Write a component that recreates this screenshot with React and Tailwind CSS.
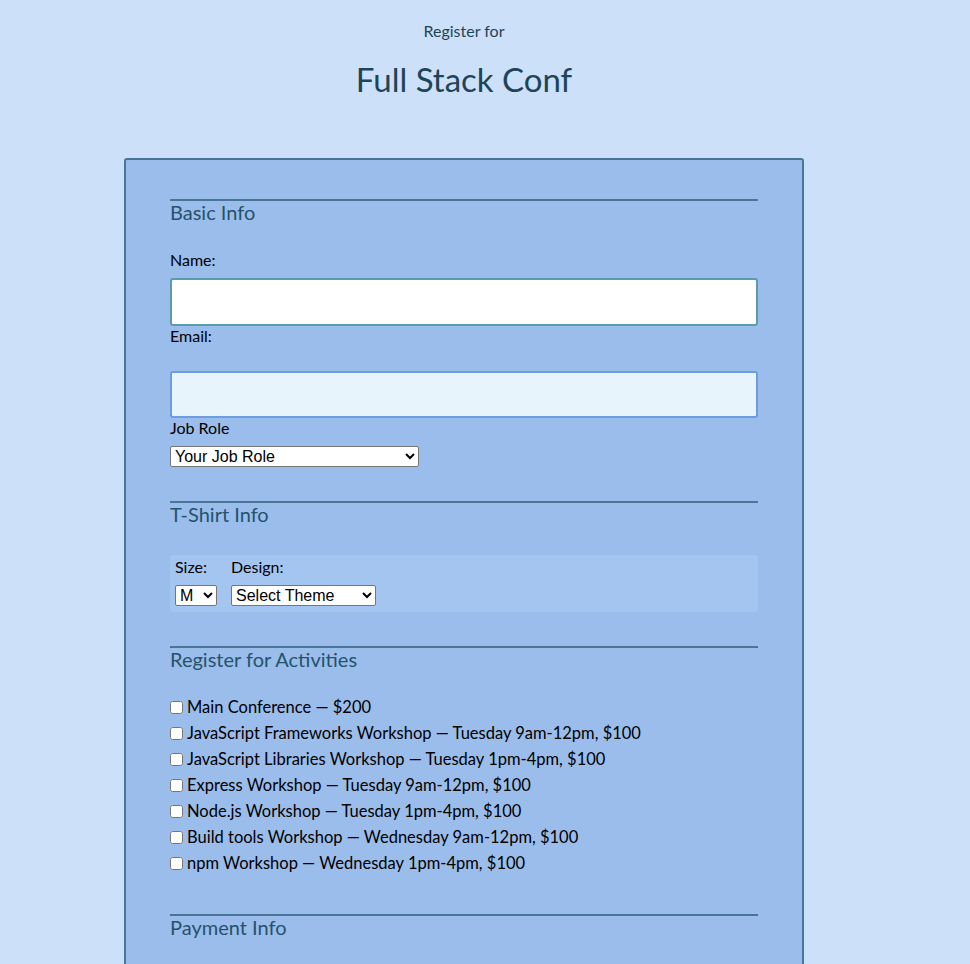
import React from 'react';

const activities = [
  'Main Conference — $200',
  'JavaScript Frameworks Workshop — Tuesday 9am-12pm, $100',
  'JavaScript Libraries Workshop — Tuesday 1pm-4pm, $100',
  'Express Workshop — Tuesday 9am-12pm, $100',
  'Node.js Workshop — Tuesday 1pm-4pm, $100',
  'Build tools Workshop — Wednesday 9am-12pm, $100',
  'npm Workshop — Wednesday 1pm-4pm, $100',
];

function Legend({ children, className = '' }) {
  return (
    <div className={`h-[26px] border-t-2 border-[#4a7596] pt-px text-[20px] leading-5 text-[#24536a] ${className}`}>
      {children}
    </div>
  );
}

export default function App() {
  return (
    <div className="min-h-screen bg-[#cce0fa] font-['Lato','Open_Sans',sans-serif] text-black">
      <div className="w-[928px]">
        {/* Header */}
        <header className="flex flex-col items-center text-[#1d4556]">
          <p className="mt-[21px] text-[16px] leading-5">Register for</p>
          <h1 className="mt-[17px] text-[33px] leading-[42px]">Full Stack Conf</h1>
        </header>

        <form className="mx-auto mt-[58px] w-[680px] rounded-[3px] border-2 border-[#4a7596] bg-[#9bbdec] px-[44px] pt-[39px] pb-10">
          {/* Basic Info */}
          <Legend>Basic Info</Legend>
          <label className="mt-[25px] block text-[16px] leading-5">Name:</label>
          <input type="text" className="mt-2 block h-[48px] w-full rounded-[3px] border-2 border-[#5c9bac] bg-white" />
          <label className="block h-[19px] text-[16px] leading-[19px]">Email:</label>
          <input type="email" className="mt-[26px] block h-[47px] w-full rounded-[3px] border-2 border-[#6d9ddf] bg-[#e8f4fc]" />
          <label className="block h-5 text-[16px] leading-5">Job Role</label>
          <select className="mt-2 block h-[21px] w-[249px] rounded-[2px] border border-[#767676] bg-white font-['Liberation_Sans',Arial,sans-serif] text-[16px] leading-[19px]">
            <option>Your Job Role</option>
          </select>

          {/* T-Shirt Info */}
          <Legend className="mt-[34px]">T-Shirt Info</Legend>
          <div className="mt-[28px] flex gap-[14px] rounded-[4px] bg-[#a5c5f1] px-[5px] pt-[2px] pb-[6px]">
            <div className="flex flex-col">
              <label className="text-[16px] leading-5">Size:</label>
              <select className="mt-2 h-[21px] w-[42px] rounded-[2px] border border-[#767676] bg-white font-['Liberation_Sans',Arial,sans-serif] text-[16px] leading-[19px]">
                <option>M</option>
              </select>
            </div>
            <div className="flex flex-col">
              <label className="text-[16px] leading-5">Design:</label>
              <select className="mt-2 h-[21px] w-[145px] rounded-[2px] border border-[#767676] bg-white font-['Liberation_Sans',Arial,sans-serif] text-[16px] leading-[19px]">
                <option>Select Theme</option>
              </select>
            </div>
          </div>

          {/* Activities */}
          <Legend className="mt-[34px]">Register for Activities</Legend>
          <div className="mt-[22px] flex flex-col">
            {activities.map((a) => (
              <label key={a} className="flex h-[26px] items-center text-[16.5px]">
                <input type="checkbox" className="mr-1 h-[13px] w-[13px]" />
                <span>{a}</span>
              </label>
            ))}
          </div>

          {/* Payment */}
          <Legend className="mt-[38px]">Payment Info</Legend>
        </form>
      </div>
    </div>
  );
}
